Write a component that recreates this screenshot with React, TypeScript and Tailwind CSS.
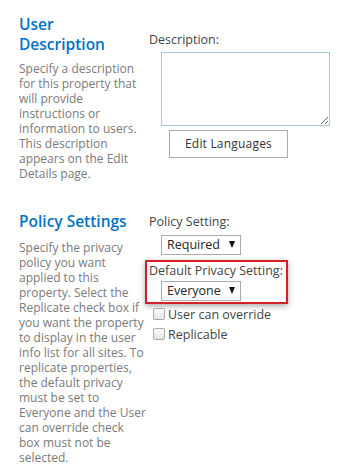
import React from "react";

function Select({ value }: { value: string }) {
  return (
    <div className="ml-[12px] flex h-[20px] w-[80px] items-center justify-between border border-[#ababab] bg-white pl-[5px] pr-[5px] text-[12.5px] leading-[18px] text-[#262626]">
      <span>{value}</span>
      <svg width="6" height="7" viewBox="0 0 6 7" className="mb-[2px]">
        <polygon points="0,0 6,0 3,7" fill="#111" />
      </svg>
    </div>
  );
}

function Check({ label }: { label: string }) {
  return (
    <div className="flex h-[20px] items-center pl-[4px]">
      <span className="block h-[12px] w-[12px] rounded-[2px] border border-[#a9a9a9] bg-gradient-to-b from-[#fdfdfd] to-[#e3e3e3]" />
      <span className="ml-[3px] text-[12.5px] leading-[15px] text-[#444]">{label}</span>
    </div>
  );
}

export default function App() {
  const head = "text-[15.5px] leading-[20px] font-semibold text-[#0072c6] whitespace-nowrap";
  const body = "text-[12px] leading-[15px] text-[#7a7a7a] whitespace-nowrap";
  const label = "text-[12.5px] leading-[15px] text-[#444] whitespace-nowrap";
  return (
    <div className="h-[468px] w-[362px] overflow-hidden bg-white pl-[19px] font-['Open_Sans',sans-serif]">
      <div className="flex pt-[14px]">
        <div className="w-[130px] shrink-0">
          <h2 className={head}>
            User
            <br />
            Description
          </h2>
          <p className={"mt-[7px] " + body}>
            Specify a description
            <br />
            for this property that
            <br />
            will provide
            <br />
            instructions or
            <br />
            information to users.
            <br />
            This description
            <br />
            appears on the Edit
            <br />
            Details page.
          </p>
        </div>
        <div className="flex-1">
          <div className={"mt-[18px] " + label}>Description:</div>
          <textarea className="mt-[5px] ml-[12px] block h-[74px] w-[169px] border border-[#a5c8d8] bg-white outline-none" />
          <button className="mt-[4px] ml-[20px] flex h-[28px] w-[119px] items-center justify-center border border-[#ababab] bg-white text-[12px] tracking-[0.2px] text-[#333]">
            Edit Languages
          </button>
        </div>
      </div>
      <div className="mt-[30px] flex">
        <div className="w-[130px] shrink-0">
          <h2 className={head}>Policy Settings</h2>
          <p className={"mt-[9px] " + body}>
            Specify the privacy
            <br />
            policy you want
            <br />
            applied to this
            <br />
            property. Select the
            <br />
            Replicate check box if
            <br />
            you want the property
            <br />
            to display in the user
            <br />
            info list for all sites. To
            <br />
            replicate properties,
            <br />
            the default privacy
            <br />
            must be set to
            <br />
            Everyone and the User
            <br />
            can override check
            <br />
            box must not be
            <br />
            selected.
          </p>
        </div>
        <div className="flex-1">
          <div className={"mt-[3px] " + label}>Policy Setting:</div>
          <div className="mt-[6px]">
            <Select value="Required" />
          </div>
          <div className="ml-[-4px] mt-[5px] h-[44px] w-[143px] border-2 border-[#d21f28] pl-[2px] shadow-[0_2px_6px_rgba(0,0,0,0.35)]">
            <div className={"mt-[1px] " + label}>Default Privacy Setting:</div>
            <div className="mt-[3px]">
              <Select value="Everyone" />
            </div>
          </div>
          <div>
            <Check label="User can override" />
            <Check label="Replicable" />
          </div>
        </div>
      </div>
    </div>
  );
}
